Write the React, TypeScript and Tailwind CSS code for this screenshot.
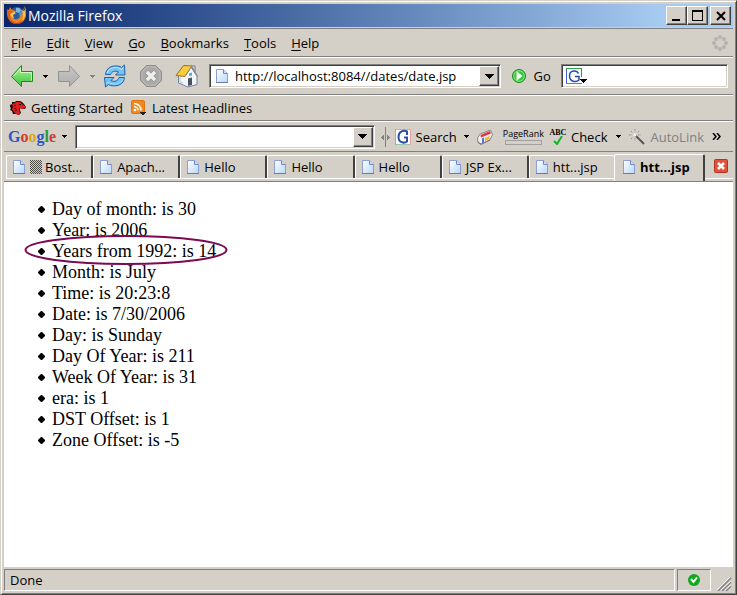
import React from "react";

const raised =
  "border border-t-white border-l-white border-r-[#404040] border-b-[#404040] bg-[#d4d0c8] shadow-[inset_-1px_-1px_0_#808080]";
const sunken =
  "border border-t-[#808080] border-l-[#808080] border-r-white border-b-white bg-white shadow-[inset_1px_1px_0_#404040,inset_-1px_-1px_0_#d4d0c8]";
const ruled = "border-b border-[#808080] shadow-[0_1px_0_#fff] mb-px";

function Caret({ className = "" }: { className?: string }) {
  return (
    <svg className={`h-[3px] w-[5px] shrink-0 ${className}`} viewBox="0 0 5 3" shapeRendering="crispEdges" aria-hidden="true">
      <path d="M0 0h5v1h-1v1h-1v1h-1v-1h-1v-1h-1z" fill="currentColor" />
    </svg>
  );
}

function DropButton({ label }: { label: string }) {
  return (
    <button aria-label={label} className={`flex w-5 shrink-0 items-center justify-center ${raised}`}>
      <svg className="h-[5px] w-[9px]" viewBox="0 0 9 5" shapeRendering="crispEdges" aria-hidden="true">
        <path d="M0 0h9v1h-1v1h-1v1h-1v1h-1v1h-1v-1h-1v-1h-1v-1h-1v-1h-1z" />
      </svg>
    </button>
  );
}

function FirefoxIcon() {
  return (
    <svg className="h-5 w-5 shrink-0" viewBox="0 0 20 20" aria-hidden="true">
      <circle cx="11" cy="8.500" r="7.500" fill="#2d5c9e" />
      <path d="M10 2c3-1 5 1 5 3l-2 2-3-1z" fill="#79b6df" />
      <path d="M13 7l3-2 1 4-3 3z" fill="#5595c8" />
      <path d="M1 3l2 1 1-3 2 3 4 1-1 2-3 2 1 3c2 2 5 2 7-1l2-3 3-4-1-4c3 3 3 7 2 10-1 5-5 8-9 8-6 0-10-5-9-13z" fill="#ec8221" />
      <path d="M17 2c4 5 2 11-1 13 1-3 2-8-1-11l3 1z" fill="#f8c03d" />
      <path d="M1 4l2 1 1-2 1 2 3 1-4 3c0 4 2 7 6 9-6-1-10-6-9-14z" fill="#d8641c" />
      <path d="M4 8l4-2 2 1-3 2 1 3c-2 0-3-2-4-4z" fill="#f9c65c" />
      <path d="M5 14c3 4 8 4 12 0-2 5-9 6-12 0z" fill="#c23c14" />
    </svg>
  );
}

function Arrow({ forward = false }: { forward?: boolean }) {
  return (
    <svg className="h-6 w-6 shrink-0" viewBox="0 0 24 24" aria-hidden="true">
      <defs>
        <linearGradient id={forward ? "fwd" : "bck"} x1="0" x2="0" y1="0" y2="1">
          <stop offset="0" stopColor={forward ? "#c9c9c7" : "#b6f59a"} />
          <stop offset="1" stopColor={forward ? "#acacaa" : "#35c43a"} />
        </linearGradient>
      </defs>
      <path
        d={forward ? "M12.500 1.500v6h-11v10h11v5l10-10z" : "M11.500 1.500v6h11v10h-11v5l-10-10z"}
        fill={forward ? "url(#fwd)" : "url(#bck)"}
        stroke={forward ? "#929290" : "#178b20"}
        strokeLinejoin="round"
      />
      {!forward && <path d="M3.500 12l7-7.500v4h11v8" fill="none" stroke="#d5fbc5" />}
    </svg>
  );
}

function ReloadIcon() {
  return (
    <svg className="h-6 w-6 shrink-0" viewBox="0 0 24 24" aria-hidden="true">
      <g fill="#72c3f7" stroke="#1c62ad" strokeLinejoin="round">
        <path d="M2.500 10.500C3 4 9 .500 17 2.500l1.500 1 3-2.500.500 10h-9.500l3-3c-4-2-7 0-8 2.500z" />
        <path d="M21.500 13.500c-.500 6.500-6.500 9.500-14 8l-2-1-3 2.500-1-9.500H11l-3 3c4 2 7 0 8-3z" />
      </g>
      <path d="M4 9c2-5 7-6.500 12-5l2.500 1.500 2-2" fill="none" stroke="#c5e8fd" />
      <path d="M20 15c-2 5-7 5.500-12 4.500L5 18.500l-2 1" fill="none" stroke="#a7dafa" />
    </svg>
  );
}

function StopIcon() {
  return (
    <svg className="h-6 w-6 shrink-0" viewBox="0 0 24 24" aria-hidden="true">
      <path d="M7.500 1.500h9l6 6v9l-6 6h-9l-6-6v-9z" fill="#a9a9a8" stroke="#8c8c8b" />
      <path d="M8 3h8l5 5v8l-5 5H8l-5-5V8z" fill="none" stroke="#bdbdbb" />
      <path d="M8 8l8 8M16 8l-8 8" stroke="#8e8e8d" strokeWidth="5" />
      <path d="M8 8l8 8M16 8l-8 8" stroke="#f0f0ee" strokeWidth="3.500" />
    </svg>
  );
}

function HomeIcon() {
  return (
    <svg className="h-6 w-6 shrink-0" viewBox="0 0 24 24" aria-hidden="true">
      <path d="M3.500 11.500L8 8l8-5 6 9.500v8l-9 2.500-9.500-4z" fill="#f3f6fb" stroke="#71829d" />
      <path d="M16 2h4v6z" fill="#f2f2f2" stroke="#777" />
      <path d="M1 11.500L8.500 1.500 17 2l-7 10.500z" fill="#f9cb3f" stroke="#9b721a" strokeLinejoin="round" />
      <path d="M10 12L17 2l6 11" fill="none" stroke="#8c8f98" />
      <path d="M13 22v-7.500l4-1V21z" fill="#4b5262" />
      <path d="M14 9.500l3-1v3l-3 .500z" fill="#4aa8e8" />
      <path d="M5 13v5l3 1" fill="none" stroke="#b5c4dc" />
    </svg>
  );
}

function PageIcon() {
  return (
    <svg className="h-4 w-3 shrink-0" viewBox="0 0 12 16" aria-hidden="true">
      <defs>
        <linearGradient id="sheet" x1="0" x2="1" y1="0" y2="1">
          <stop offset="0" stopColor="#ffffff" />
          <stop offset="1" stopColor="#b9d8f8" />
        </linearGradient>
      </defs>
      <path d="M.500 1.500h7l4 4v9H.500z" fill="url(#sheet)" stroke="#8c9ed2" />
      <path d="M7.500 1.500v4h4" fill="#cfe2fa" stroke="#7288c6" />
      <path d="M0 14.500h12" stroke="#6f78ae" />
    </svg>
  );
}

function GoIcon() {
  return (
    <svg className="h-4 w-4 shrink-0" viewBox="0 0 16 16" aria-hidden="true">
      <circle cx="8" cy="8" r="6.500" fill="#35c83a" stroke="#16861c" />
      <circle cx="8" cy="8" r="5.300" fill="none" stroke="#92ea8b" />
      <path d="M6 4l5 4-5 4z" fill="#fff" stroke="#e8ffe4" />
    </svg>
  );
}

function SearchEngineIcon() {
  return (
    <svg className="h-[18px] w-[22px] shrink-0" viewBox="0 0 22 18" aria-hidden="true">
      <path d="M.500 16V1.500" stroke="#3a63d8" />
      <path d="M0 1.500h16" stroke="#2ea84a" />
      <path d="M15.500 2v8" stroke="#e23a30" />
      <path d="M0 16.500h16" stroke="#2ea84a" />
      <path d="M12.500 6.500C11 3 4 2.500 3.500 8.500c0 7 7 7 9.500 4.500V9.500H9" fill="none" stroke="#2446b8" strokeWidth="1.500" />
      <path d="M14 12h7v1h-1v1h-1v1h-1v1h-1v-1h-1v-1h-1v-1h-1z" fill="#000" shapeRendering="crispEdges" />
    </svg>
  );
}

function GoogleGIcon() {
  return (
    <svg className="h-4 w-4 shrink-0" viewBox="0 0 16 16" aria-hidden="true">
      <path d="M.500.500h15v15H.500z" fill="#fff" stroke="#9cc8a8" />
      <path d="M.500 0v16" stroke="#8fa8e8" />
      <path d="M15.500 0v16" stroke="#eaa09a" />
      <path d="M12 6V2.500C9 1 3.500 2 3.500 8c0 6 6 6.500 8.500 4.500V8.500H9" fill="none" stroke="#2d4fa0" strokeWidth="2" />
    </svg>
  );
}

function DinoIcon() {
  return (
    <svg className="h-4 w-4 shrink-0" viewBox="0 0 16 16" aria-hidden="true">
      <path d="M0 5l2-1 0-2 3 0 1-1h4l2 1 2 2 2 3-1 2-3 0-2-1 0 2 1 3-2 2-3-1-3 0-1-3-2-1 1-2-1-1z" fill="#141010" />
      <path d="M2 4l3-1 1-1h4l2 2 3 2 0 2-2 1-4-1 0 1 1 4-1 2-3-1-3-3-1-2 1-2z" fill="#e01c1c" />
      <path d="M9 4h2v1H9z" fill="#000" />
      <path d="M4 5l2 1M4 8l2 1M5 11l2-1" stroke="#6a0808" />
    </svg>
  );
}

function FeedIcon() {
  return (
    <svg className="h-4 w-4 shrink-0" viewBox="0 0 16 16" aria-hidden="true">
      <rect x=".5" y=".5" width="13" height="13" rx="1.500" fill="#f18a1c" stroke="#e0740c" />
      <path d="M3 3.500c4 0 7 3 7 7M3 6.500c2.500 0 4 2 4 4" fill="none" stroke="#fff" strokeWidth="1.600" />
      <circle cx="4" cy="10" r="1.300" fill="#fff" />
      <path d="M9 12h6v1h-1v1h-1v1h-2v-1h-1v-1H9z" fill="#222" shapeRendering="crispEdges" />
    </svg>
  );
}

function GripIcon() {
  return (
    <svg className="h-5 w-[9px] shrink-0" viewBox="0 0 9 20" shapeRendering="crispEdges" aria-hidden="true">
      <path d="M4 0h1v20H4zM3 8v5H2v-1H1v-1H0v-1h1V9h1V8zM6 8v5h1v-1h1v-1h1v-1H8V9H7V8z" fill="#808080" />
    </svg>
  );
}

function EraserIcon() {
  return (
    <svg className="h-4 w-4 shrink-0" viewBox="0 0 16 16" aria-hidden="true">
      <path d="M.500 9L3 5 13.500 1l2 4.500L13 11 4 15.500l-3-2z" fill="#f0eef0" stroke="#86848a" />
      <path d="M3.500 6L13 2l1 2.500-10 4z" fill="#e8343c" />
      <path d="M5 9.500l2-1v5l-2 .500z" fill="#4c6cd8" />
      <path d="M8 9l4.500-2v3L8 12z" fill="#f5b130" />
      <path d="M1 13l3 2 9-4" fill="none" stroke="#8a6a70" />
    </svg>
  );
}

function WandIcon() {
  return (
    <svg className="h-4 w-4 shrink-0" viewBox="0 0 16 16" aria-hidden="true">
      <path d="M6 6l9 9" stroke="#55555a" strokeWidth="2" />
      <path d="M6 0v3M6 9v3M0 6h3M9 6h3M2 2l2 2M10 2L8 4M2 10l2-2" stroke="#8d8d8d" strokeDasharray="1.500 1" />
      <path d="M5 5l2 2" stroke="#fff" strokeWidth="2" />
    </svg>
  );
}

function Throbber() {
  const dots = [[8, 2], [12, 4], [14, 8], [12, 12], [8, 14], [4, 12], [2, 8], [4, 4]];
  return (
    <svg className="h-4 w-4" viewBox="0 0 16 16" aria-hidden="true">
      {dots.map(([x, y]) => (
        <circle key={`${x}-${y}`} cx={x} cy={y} r="2" fill="#b2b2b2" />
      ))}
    </svg>
  );
}

const menus = ["File", "Edit", "View", "Go", "Bookmarks", "Tools", "Help"];

const tabs = [
  { title: "Bost...", shaded: true },
  { title: "Apach..." },
  { title: "Hello" },
  { title: "Hello" },
  { title: "Hello" },
  { title: "JSP Ex..." },
  { title: "htt...jsp", last: true },
];

const facts = [
  "Day of month: is 30",
  "Year: is 2006",
  "Years from 1992: is 14",
  "Month: is July",
  "Time: is 20:23:8",
  "Date: is 7/30/2006",
  "Day: is Sunday",
  "Day Of Year: is 211",
  "Week Of Year: is 31",
  "era: is 1",
  "DST Offset: is 1",
  "Zone Offset: is -5",
];

function TitleBar() {
  const box = `flex h-[19px] items-center justify-center ${raised}`;
  return (
    <header className="mb-px flex h-[23px] items-center bg-linear-to-r from-[#0a246a] to-[#a6caf0] to-90% pr-0.5 pl-0.5">
      <FirefoxIcon />
      <h1 className="ml-0.5 flex-1 text-sm font-medium text-white">Mozilla Firefox</h1>
      <button aria-label="Minimize" className={`${box} w-[21px]`}>
        <svg className="h-3 w-3" viewBox="0 0 12 12" shapeRendering="crispEdges"><path d="M1 9h8v2H1z" /></svg>
      </button>
      <button aria-label="Maximize" className={`${box} w-[21px]`}>
        <svg className="h-3 w-3" viewBox="0 0 12 12" shapeRendering="crispEdges"><path d="M0 0h11v11H0zM1 2v8h9V2z" fillRule="evenodd" /></svg>
      </button>
      <button aria-label="Close" className={`${box} ml-0.5 w-[21px]`}>
        <svg className="h-3 w-3" viewBox="0 0 12 12"><path d="M2 2l8 8M10 2l-8 8" stroke="#000" strokeWidth="2" /></svg>
      </button>
    </header>
  );
}

export default function App() {
  return (
    <div className="flex min-h-screen flex-col border border-t-[#d4d0c8] border-r-[#404040] border-b-[#404040] border-l-[#d4d0c8] bg-[#d4d0c8] p-[3px] font-['Open_Sans','Noto_Sans',sans-serif] text-[13px] leading-4 text-black shadow-[inset_1px_1px_0_#fff,inset_-1px_-1px_0_#808080]">
      <TitleBar />

      <nav className={`flex h-[29px] items-center border-t border-[#808080] pr-[5px] pl-[7px] ${ruled}`}>
        <div className="flex flex-1 gap-[15px]">
          {menus.map((m) => (
            <button key={m}>
              <span className="underline underline-offset-2">{m[0]}</span>
              {m.slice(1)}
            </button>
          ))}
        </div>
        <Throbber />
      </nav>

      <div className={`flex h-[37px] items-center pr-[5px] pl-1.5 ${ruled}`}>
        <button aria-label="Back"><Arrow /></button>
        <Caret className="ml-[9px]" />
        <button aria-label="Forward" className="ml-[9px]"><Arrow forward /></button>
        <Caret className="ml-[9px] text-[#808080]" />
        <button aria-label="Reload" className="ml-2"><ReloadIcon /></button>
        <button aria-label="Stop" className="ml-3"><StopIcon /></button>
        <button aria-label="Home" className="ml-3"><HomeIcon /></button>
        <div className={`ml-2.5 flex h-6 min-w-0 flex-[299] items-stretch p-px ${sunken}`}>
          <div className="flex min-w-0 flex-1 items-center gap-[7px] pl-[5px]">
            <PageIcon />
            <input aria-label="Address" className="min-w-0 flex-1 bg-transparent outline-none" defaultValue="http://localhost:8084//dates/date.jsp" />
          </div>
          <DropButton label="Show history" />
        </div>
        <button className="ml-2.5 flex items-center gap-1.5"><GoIcon />Go</button>
        <div className={`ml-2.5 flex h-6 min-w-0 flex-[163] items-center px-1 ${sunken}`}>
          <SearchEngineIcon />
          <input aria-label="Search the web" className="min-w-0 flex-1 bg-transparent outline-none" />
        </div>
      </div>

      <div className={`flex h-[25px] items-center gap-2 pl-1.5 ${ruled}`}>
        <a href="#start" className="flex items-center gap-[5px]"><DinoIcon />Getting Started</a>
        <a href="#headlines" className="flex items-center gap-[5px]"><FeedIcon />Latest Headlines</a>
      </div>

      <div className="flex h-[30px] items-center border-b border-[#808080] pr-3 pl-1">
        <button aria-label="Google" className="flex items-center gap-1.5">
          <span className="font-['Liberation_Serif',serif] text-base font-bold">
            <span className="text-[#2a56c6]">G</span>
            <span className="text-[#d43a2c]">o</span>
            <span className="text-[#d9a514]">o</span>
            <span className="text-[#2a56c6]">g</span>
            <span className="text-[#2a9a3c]">l</span>
            <span className="text-[#d43a2c]">e</span>
          </span>
          <Caret />
        </button>
        <div className={`ml-2 flex h-6 min-w-0 flex-1 items-stretch p-px ${sunken}`}>
          <input aria-label="Google search" className="min-w-0 flex-1 bg-transparent px-1 outline-none" />
          <DropButton label="Show searches" />
        </div>
        <div className="ml-1.5 flex items-center gap-[5px]">
          <GripIcon />
          <button className="flex items-center gap-[5px]"><GoogleGIcon />Search</button>
          <Caret className="mx-0.5" />
        </div>
        <button aria-label="Highlighter" className="ml-1.5"><EraserIcon /></button>
        <div className="ml-2.5 flex flex-col gap-px text-[9px] leading-[10px]">
          PageRank
          <span className="mx-0.5 h-[5px] border border-[#a0a0a0]" />
        </div>
        <button className="ml-1.5 flex items-center gap-[5px]">
          <span className="flex w-4 flex-col items-center font-['Liberation_Serif',serif] text-[8px] leading-[7px] font-bold">
            ABC
            <svg className="h-[9px] w-2.5" viewBox="0 0 10 9" aria-hidden="true">
              <path d="M1 5l3 3 5-8" fill="none" stroke="#12b52a" strokeWidth="2" />
            </svg>
          </span>
          Check
        </button>
        <Caret className="ml-[9px]" />
        <button className="ml-2 flex items-center gap-[5px] text-[#808080]"><WandIcon />AutoLink</button>
        <button aria-label="More" className="ml-2">
          <svg className="h-[7px] w-[9px]" viewBox="0 0 9 7" aria-hidden="true">
            <path d="M1 0l3 3.500L1 7M5 0l3 3.500L5 7" fill="none" stroke="#000" strokeWidth="1.500" />
          </svg>
        </button>
      </div>

      <div className="flex h-[30px] items-end border-b border-[#808080] pl-0.5">
        <div role="tablist" className="flex h-full min-w-0 flex-1 items-end">
          <div className="mb-0.5 flex min-w-0 flex-[608] border-b border-white">
            {tabs.map((t, i) => (
              <button
                key={i}
                role="tab"
                aria-selected="false"
                className={`flex h-[23px] min-w-0 flex-1 items-center gap-[5px] rounded-t-xs border-t border-l border-white pl-1.5 whitespace-nowrap ${
                  t.last ? "" : "border-r-2 border-r-[#404040]"
                }`}
              >
                <PageIcon />
                <span className="flex items-center gap-[3px]">
                  {t.shaded && (
                    <svg className="h-[14px] w-3" viewBox="0 0 12 14" shapeRendering="crispEdges" aria-hidden="true">
                      <defs>
                        <pattern id="dots" width="2" height="2" patternUnits="userSpaceOnUse">
                          <path d="M0 0h1v1H0zM1 1h1v1H1z" />
                        </pattern>
                      </defs>
                      <path d="M0 0h12v14H0z" fill="url(#dots)" opacity=".65" />
                    </svg>
                  )}
                  {t.title}
                </span>
              </button>
            ))}
          </div>
          <button
            role="tab"
            aria-selected="true"
            className="flex h-[27px] min-w-0 flex-[80] items-center gap-[5px] rounded-t-xs border-t border-r-2 border-l border-t-white border-r-[#404040] border-l-white pb-0.5 pl-2 font-bold whitespace-nowrap"
          >
            <PageIcon />
            htt...jsp
          </button>
        </div>
        <div className="mb-0.5 flex h-[26px] w-7 items-center justify-end border-b border-white pr-[5px]">
          <button aria-label="Close tab">
            <svg className="h-[14px] w-[14px]" viewBox="0 0 14 14" aria-hidden="true">
              <rect x=".5" y=".5" width="13" height="13" rx="1" fill="#e0533a" stroke="#b53325" />
              <path d="M4 4l6 6M10 4l-6 6" stroke="#fff" strokeWidth="2.500" />
            </svg>
          </button>
        </div>
      </div>

      <main className="flex-1 bg-white pt-[17px] pl-[34px]">
        <ul className="font-['Liberation_Serif',serif] text-lg leading-[21px]">
          {facts.map((f, i) => (
            <li key={f} className="relative flex h-[21px] items-center gap-[7px] leading-[21px]">
              <svg className="h-[7px] w-[7px]" viewBox="0 0 7 7" aria-hidden="true">
                <path d="M3 0h1l3 3v1L4 7H3L0 4V3z" />
              </svg>
              {f}
              {i === 2 && (
                <svg className="absolute -top-1.5 -left-[14px] h-[31px] w-[204px]" viewBox="0 0 204 31" aria-hidden="true">
                  <ellipse cx="102" cy="15" rx="100.500" ry="14" fill="none" stroke="#7b0a55" strokeWidth="2" />
                </svg>
              )}
            </li>
          ))}
        </ul>
      </main>

      <footer className="flex h-6 items-stretch gap-0.5 pt-0.5">
        <div className="flex flex-1 items-center border border-t-[#808080] border-r-white border-b-white border-l-[#808080] pl-[5px]">Done</div>
        <div className="flex w-[34px] items-center justify-center border border-t-[#808080] border-r-white border-b-white border-l-[#808080]">
          <svg className="h-3 w-3" viewBox="0 0 12 12" aria-hidden="true">
            <circle cx="6" cy="6" r="6" fill="#12a81e" />
            <path d="M3 5l2.500 3L9 3.500" fill="none" stroke="#fff" strokeWidth="2" />
          </svg>
        </div>
        <svg className="ml-1 h-[14px] w-4 self-end" viewBox="0 0 16 14" aria-hidden="true">
          <path d="M1 14L14 1M5 14l9-9M9 14l5-5" stroke="#808080" strokeWidth="1.500" />
          <path d="M0 13L13 0M4 13l10-9M8 13l6-5" stroke="#fff" strokeWidth=".8" />
        </svg>
      </footer>
    </div>
  );
}
